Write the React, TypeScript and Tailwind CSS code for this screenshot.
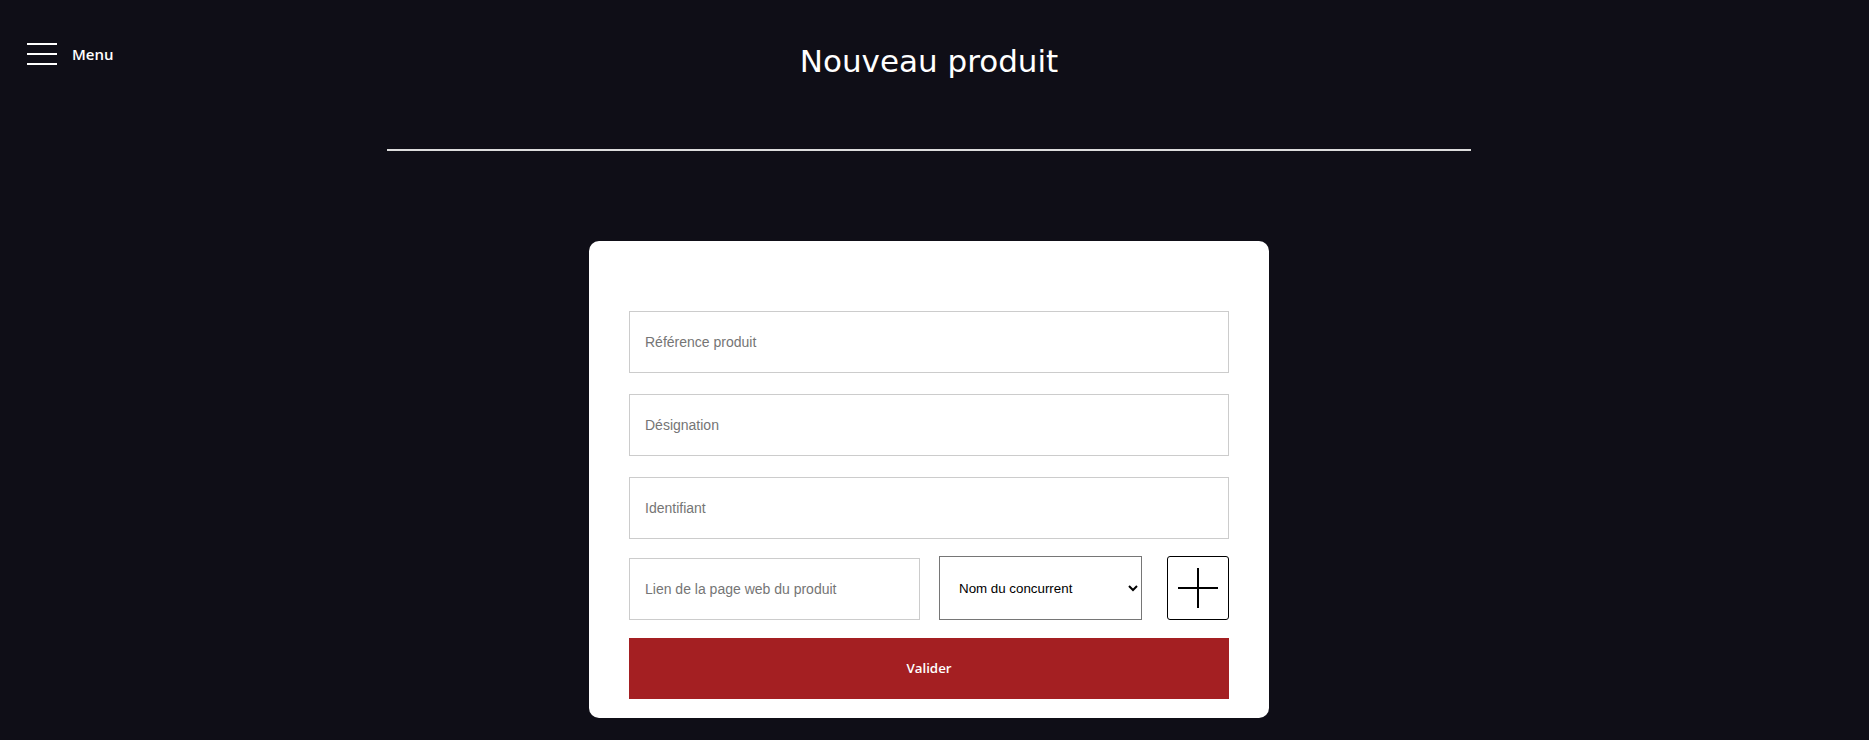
import React, { useState } from 'react';

const competitors = ['Nom du concurrent', 'Concurrent A', 'Concurrent B'];

const fieldClass =
  "block w-full h-[62px] border border-[#cccccc] bg-white px-[15px] text-[14px] text-black placeholder:text-[#757575] outline-none font-['Liberation_Sans',Arial,sans-serif]";

const App: React.FC = () => {
  const [competitor, setCompetitor] = useState(competitors[0]);

  return (
    <div className="min-h-screen bg-[#0f0e17] pr-[11px] pb-[40px]">
      {/* Header */}
      <header className="grid grid-cols-[1fr_auto_1fr] items-start pt-[43px]">
        <button className="flex items-center gap-[15px] justify-self-start pl-[27px] text-white">
          <span className="flex flex-col gap-[8px]">
            <span className="block h-[2px] w-[30px] bg-white" />
            <span className="block h-[2px] w-[30px] bg-white" />
            <span className="block h-[2px] w-[30px] bg-white" />
          </span>
          <span className="text-[15px] leading-[20px] font-semibold font-['Open_Sans',sans-serif]">Menu</span>
        </button>
        <h1 className="text-[31px] leading-[36px] text-white font-['DejaVu_Sans',sans-serif]">Nouveau produit</h1>
        <div />
      </header>

      <div className="mx-auto mt-[70px] h-[2px] w-[1084px] bg-[#dcdcdc]" />

      {/* Form card */}
      <div className="mx-auto mt-[90px] w-[680px] rounded-[10px] bg-white px-[40px] pt-[70px] pb-[19px]">
        <form className="flex flex-col" onSubmit={e => e.preventDefault()}>
          <input className={fieldClass} placeholder="Référence produit" />
          <input className={fieldClass + ' mt-[21px]'} placeholder="Désignation" />
          <input className={fieldClass + ' mt-[21px]'} placeholder="Identifiant" />

          <div className="mt-[17px] flex items-end">
            <input className={fieldClass + ' !w-[291px] shrink-0'} placeholder="Lien de la page web du produit" />
            <select
              value={competitor}
              onChange={e => setCompetitor(e.target.value)}
              className="ml-[19px] h-[64px] w-[203px] shrink-0 border border-[#767676] bg-white pl-[15px] pr-[4px] text-[13.33px] text-black font-['Liberation_Sans',Arial,sans-serif]"
            >
              {competitors.map(c => (
                <option key={c} value={c}>{c}</option>
              ))}
            </select>
            <button
              type="button"
              className="ml-auto flex h-[64px] w-[62px] items-center justify-center rounded-[3px] border border-black bg-white"
            >
              <svg width="40" height="40" viewBox="0 0 40 40" fill="none" stroke="black" strokeWidth={2}>
                <path d="M20 0v40M0 20h40" />
              </svg>
            </button>
          </div>

          <button
            type="submit"
            className="mt-[18px] h-[61px] w-full bg-[#a41f22] text-[13.33px] font-semibold text-white font-['Open_Sans',sans-serif]"
          >
            Valider
          </button>
        </form>
      </div>
    </div>
  );
};

export default App;
